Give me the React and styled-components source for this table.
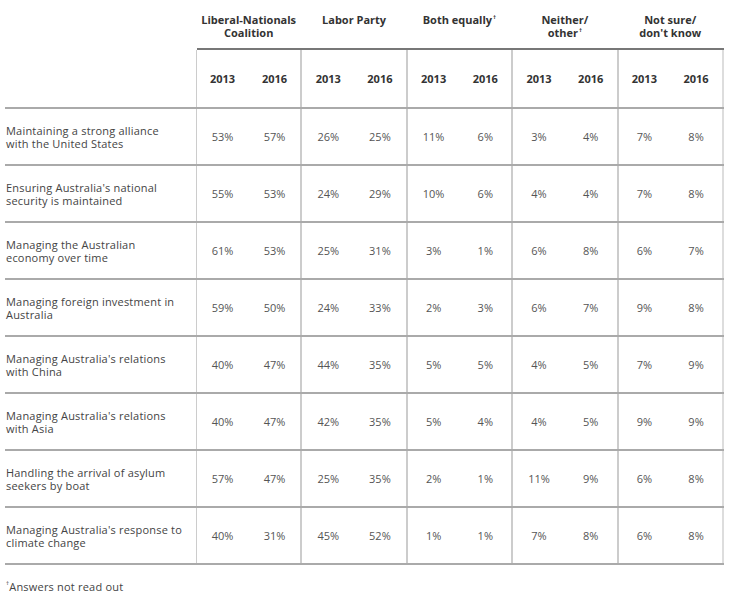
import styled, { createGlobalStyle } from "styled-components";

const GlobalStyle = createGlobalStyle`
  body {
    margin: 0;
    background: #fff;
    font-family: "Open Sans", "DejaVu Sans", sans-serif;
  }
`;

const Page = styled.div`
  padding: 0 9px 0 5px;
  width: 718px;
`;

const Table = styled.table`
  border-collapse: collapse;
  width: 718px;
  table-layout: fixed;
`;

const GroupHead = styled.th`
  height: 35px;
  padding: 13px 4px 0 4px;
  font-size: 11px;
  font-weight: 700;
  color: #333;
  line-height: 13px;
  text-align: center;
  vertical-align: top;
  border-bottom: 2px solid ${(p) => (p.$blank ? "transparent" : "#777")};
`;

const YearHead = styled.th`
  height: 55px;
  font-size: 11px;
  font-weight: 700;
  color: #333;
  text-align: center;
  border-bottom: 2px solid #aaa;
  border-right: ${(p) => (p.$edge ? (p.$last ? "2px solid #ddd" : "2px solid #ccc") : "none")};
`;

const BlankHead = styled.th`
  border-bottom: 2px solid #aaa;
  border-right: 1px solid #ccc;
`;

const Label = styled.td`
  height: 55px;
  padding: 0 0 0 1px;
  font-size: 11px;
  line-height: 13px;
  letter-spacing: 0.2px;
  white-space: nowrap;
  color: #444;
  border-bottom: 2px solid #aaa;
  border-right: 1px solid #ccc;
`;

const Line = styled.span`
  display: block;
  height: 13px;
  line-height: 13px;
`;

const Cell = styled.td`
  font-size: 11px;
  color: #555;
  text-align: center;
  border-bottom: 2px solid #aaa;
  border-right: ${(p) => (p.$edge ? (p.$last ? "2px solid #ddd" : "2px solid #ccc") : "none")};
`;

const Dagger = styled.sup`
  font-size: 6px;
  line-height: 6px;
  vertical-align: top;
  position: relative;
  top: 1px;
  margin-left: 1px;
`;

const Footnote = styled.p`
  margin: 14px 0 0 0;
  font-size: 11px;
  letter-spacing: 0.2px;
  color: #444;
`;

const groups = [
  ["Liberal-Nationals", "Coalition"],
  ["Labor Party"],
  ["Both equally†"],
  ["Neither/", "other†"],
  ["Not sure/", "don't know"],
];

const rows = [
  [["Maintaining a strong alliance", "with the United States"], "53%", "57%", "26%", "25%", "11%", "6%", "3%", "4%", "7%", "8%"],
  [["Ensuring Australia's national", "security is maintained"], "55%", "53%", "24%", "29%", "10%", "6%", "4%", "4%", "7%", "8%"],
  [["Managing the Australian", "economy over time"], "61%", "53%", "25%", "31%", "3%", "1%", "6%", "8%", "6%", "7%"],
  [["Managing foreign investment in", "Australia"], "59%", "50%", "24%", "33%", "2%", "3%", "6%", "7%", "9%", "8%"],
  [["Managing Australia's relations", "with China"], "40%", "47%", "44%", "35%", "5%", "5%", "4%", "5%", "7%", "9%"],
  [["Managing Australia's relations", "with Asia"], "40%", "47%", "42%", "35%", "5%", "4%", "4%", "5%", "9%", "9%"],
  [["Handling the arrival of asylum", "seekers by boat"], "57%", "47%", "25%", "35%", "2%", "1%", "11%", "9%", "6%", "8%"],
  [["Managing Australia's response to", "climate change"], "40%", "31%", "45%", "52%", "1%", "1%", "7%", "8%", "6%", "8%"],
];

function renderLine(line) {
  if (line.endsWith("†")) {
    return (
      <>
        {line.slice(0, -1)}
        <Dagger>†</Dagger>
      </>
    );
  }
  return line;
}

function Lines({ lines }) {
  return lines.map((line, j) => <Line key={j}>{renderLine(line)}</Line>);
}

export default function App() {
  return (
    <Page>
      <GlobalStyle />
      <Table>
        <colgroup>
          <col style={{ width: 191 }} />
          {Array.from({ length: 10 }).map((_, i) => (
            <col key={i} style={{ width: 52.7 }} />
          ))}
        </colgroup>
        <thead>
          <tr>
            <GroupHead $blank />
            {groups.map((g, i) => (
              <GroupHead key={i} colSpan={2}>
                <Lines lines={g} />
              </GroupHead>
            ))}
          </tr>
          <tr>
            <BlankHead />
            {groups.flatMap((_, i) => [
              <YearHead key={i + "a"}>2013</YearHead>,
              <YearHead key={i + "b"} $edge $last={i === 4}>
                2016
              </YearHead>,
            ])}
          </tr>
        </thead>
        <tbody>
          {rows.map((r) => (
            <tr key={r[0][0] + r[0][1]}>
              <Label>
                <Lines lines={r[0]} />
              </Label>
              {r.slice(1).map((v, i) => (
                <Cell key={i} $edge={i % 2 === 1} $last={i === 9}>
                  {v}
                </Cell>
              ))}
            </tr>
          ))}
        </tbody>
      </Table>
      <Footnote>
        <Dagger>†</Dagger>Answers not read out
      </Footnote>
    </Page>
  );
}
